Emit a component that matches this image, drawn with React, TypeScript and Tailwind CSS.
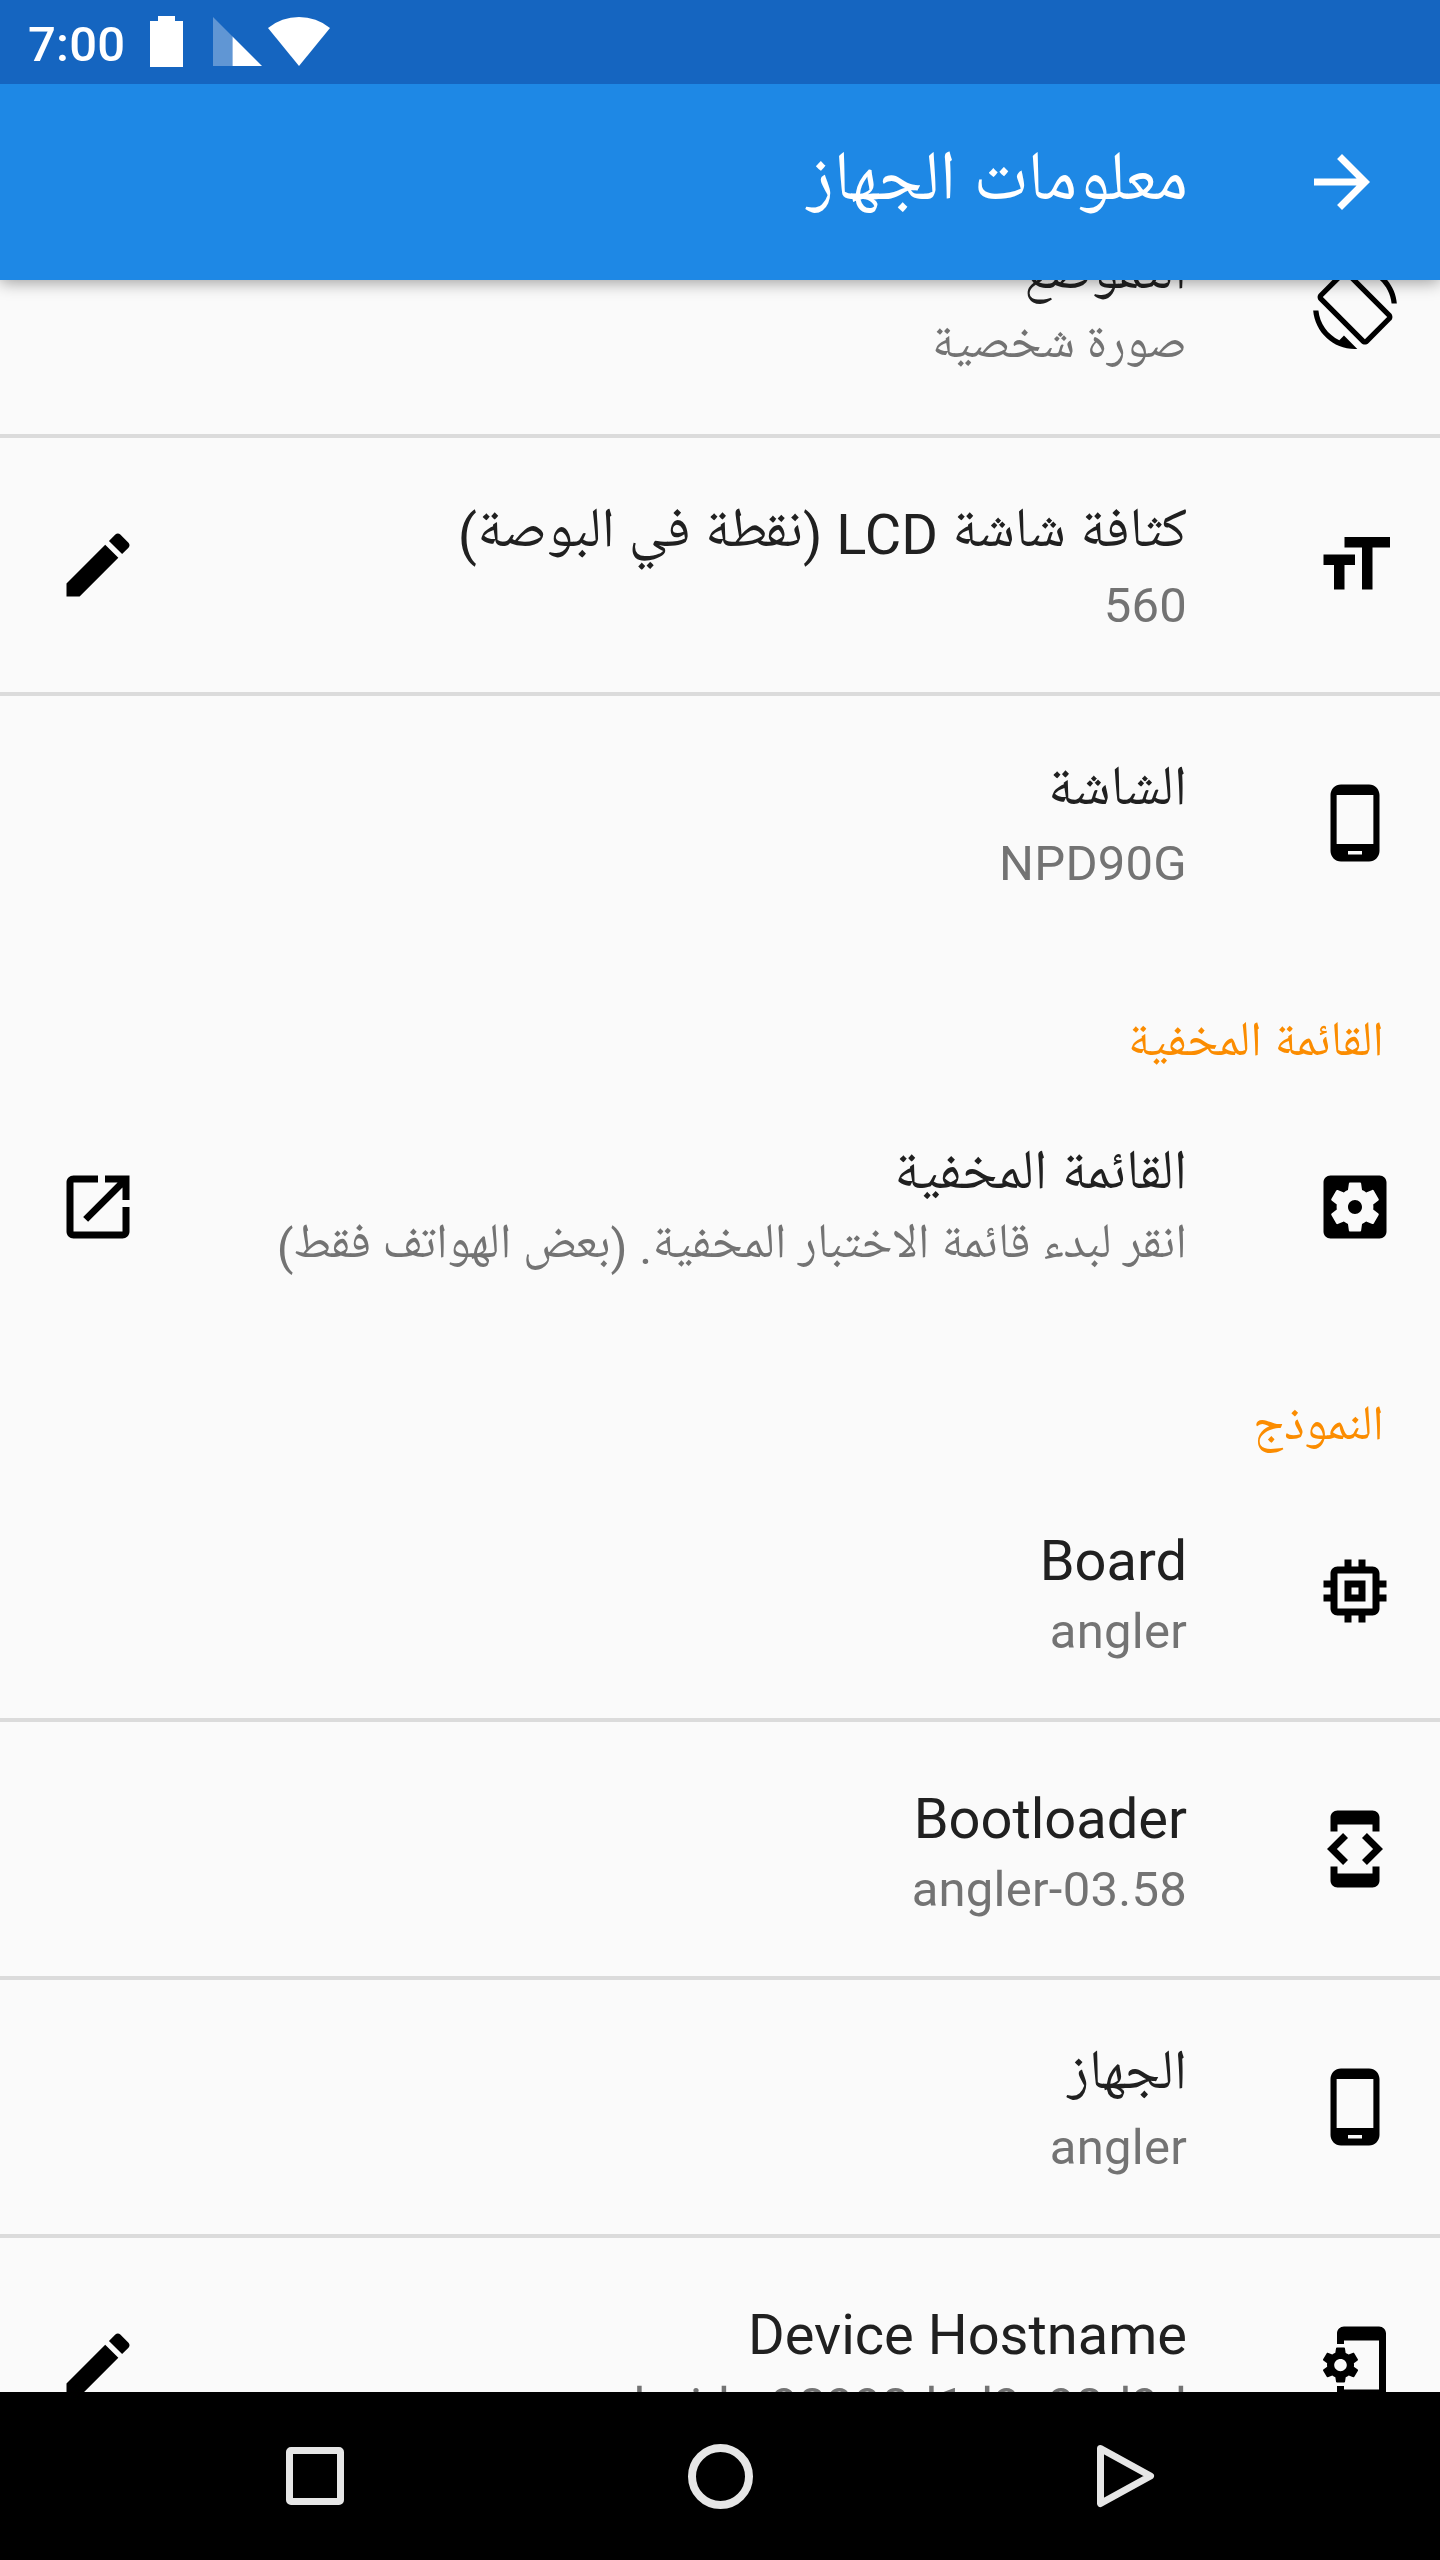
import type { ReactNode } from 'react';
import { MdPhonelinkSetup } from 'react-icons/md';

const ICON_PATHS = {
  arrowForward: 'M12 4l-1.41 1.41L16.17 11H4v2h12.17l-5.58 5.59L12 20l8-8z',
  screenRotation:
    'M16.48 2.52c3.27 1.55 5.61 4.72 5.97 8.48h1.5C23.44 4.84 18.29 0 12 0l-.66.03 3.81 3.81 1.33-1.32zm-6.25-.77c-.59-.59-1.54-.59-2.12 0L1.75 8.11c-.59.59-.59 1.54 0 2.12l12.02 12.02c.59.59 1.54.59 2.12 0l6.36-6.36c.59-.59.59-1.54 0-2.12L10.23 1.75zm4.6 19.44L2.81 9.17l6.36-6.36 12.02 12.02-6.36 6.36zm-7.31.29C4.25 19.94 1.91 16.76 1.55 13H.05C.56 19.16 5.71 24 12 24l.66-.03-3.81-3.81-1.33 1.32z',
  formatSize: 'M9 4v3h5v12h3V7h5V4H9zm-6 8h3v7h3v-7h3V9H3v3z',
  phone:
    'M16 1H8C6.34 1 5 2.34 5 4v16c0 1.66 1.34 3 3 3h8c1.66 0 3-1.34 3-3V4c0-1.66-1.34-3-3-3zm-2 20h-4v-1h4v1zm3.25-3H6.75V4h10.5v14z',
  settingsApplications:
    'M12 10c-1.1 0-2 .9-2 2s.9 2 2 2 2-.9 2-2-.9-2-2-2zm7-7H5c-1.11 0-2 .9-2 2v14c0 1.1.89 2 2 2h14c1.11 0 2-.9 2-2V5c0-1.1-.89-2-2-2zm-1.75 9c0 .23-.02.46-.05.68l1.48 1.16c.13.11.17.3.08.45l-1.4 2.42c-.09.15-.27.21-.43.15l-1.74-.7c-.36.28-.76.51-1.18.69l-.26 1.85c-.03.17-.18.3-.35.3h-2.8c-.17 0-.32-.13-.35-.29l-.26-1.85c-.43-.18-.82-.41-1.18-.69l-1.74.7c-.16.06-.34 0-.43-.15l-1.4-2.42c-.09-.15-.05-.34.08-.45l1.48-1.16c-.03-.23-.05-.46-.05-.69 0-.23.02-.46.05-.68l-1.48-1.16c-.13-.11-.17-.3-.08-.45l1.4-2.42c.09-.15.27-.21.43-.15l1.74.7c.36-.28.76-.51 1.18-.69l.26-1.85c.03-.17.18-.3.35-.3h2.8c.17 0 .32.13.35.29l.26 1.85c.43.18.82.41 1.18.69l1.74-.7c.16-.06.34 0 .43.15l1.4 2.42c.09.15.05.34-.08.45l-1.48 1.16c.03.23.05.46.05.69z',
  memory:
    'M15 9H9v6h6V9zm-2 4h-2v-2h2v2zm8-2V9h-2V7c0-1.1-.9-2-2-2h-2V3h-2v2h-2V3H9v2H7c-1.1 0-2 .9-2 2v2H3v2h2v2H3v2h2v2c0 1.1.9 2 2 2h2v2h2v-2h2v2h2v-2h2c1.1 0 2-.9 2-2v-2h2v-2h-2v-2h2zm-4 6H7V7h10v10z',
  developerMode:
    'M7 5h10v2h2V3c0-1.1-.9-1.99-2-1.99L7 1c-1.1 0-2 .9-2 2v4h2V5zm8.41 11.59L20 12l-4.59-4.59L14 8.83 17.17 12 14 15.17l1.41 1.42zM10 15.17L6.83 12 10 8.83 8.59 7.41 4 12l4.59 4.59L10 15.17zM17 19H7v-2H5v4c0 1.1.9 2 2 2h10c1.1 0 2-.9 2-2v-4h-2v2z',
  edit: 'M3 17.25V21h3.75L17.81 9.94l-3.75-3.75L3 17.25zM20.71 7.04c.39-.39.39-1.02 0-1.41l-2.34-2.34c-.39-.39-1.02-.39-1.41 0l-1.83 1.83 3.75 3.75 1.83-1.83z',
  openInNew:
    'M19 19H5V5h7V3H5c-1.11 0-2 .9-2 2v14c0 1.1.89 2 2 2h14c1.1 0 2-.9 2-2v-7h-2v7zM14 3v2h3.59l-9.83 9.83 1.41 1.41L19 6.41V10h2V3h-7z',
};

function Icon({ name }: { name: keyof typeof ICON_PATHS }) {
  return (
    <svg viewBox="0 0 24 24" className="size-[84px] shrink-0 fill-current" aria-hidden="true">
      <path d={ICON_PATHS[name]} />
    </svg>
  );
}

type RowProps = { icon: ReactNode; title: string; value: string; action?: ReactNode; divider?: boolean };

// Letter spacing would break the joins of Arabic script, so only Latin values get it.
const isLatin = (text: string) => /^[\x20-\x7e]+$/.test(text);

function Row({ icon, title, value, action, divider }: RowProps) {
  const valueSpacing = isLatin(value) ? 'tracking-[0.25px]' : '[word-spacing:-0.6px]';
  return (
    <li className={divider ? 'h-[258px] border-b-4 border-[#dbdbdb]' : 'h-[254px]'}>
      <div className="flex h-[254px] items-center pr-[43px] pl-14 text-black">
        {icon}
        <div className="mr-[126px] flex h-full flex-1 flex-col pt-16 text-right">
          <p className="text-[56px] leading-[66px] whitespace-nowrap text-[#202020]">{title}</p>
          <p className={`mt-[9px] text-[49px] leading-[58px] whitespace-nowrap text-[#737373] ${valueSpacing}`}>
            {value}
          </p>
        </div>
        {action}
      </div>
    </li>
  );
}

function SectionHeader({ children }: { children: ReactNode }) {
  return (
    <li className="h-[130px] px-14 pt-[67px] text-[49px] leading-[58px] text-[#fb8c00]">{children}</li>
  );
}

function StatusBar() {
  return (
    <div dir="ltr" className="relative z-20 flex h-[84px] shrink-0 items-start bg-[#1565c0] pl-[28px] text-white">
      <span className="mt-4 w-[122px] text-[49px] leading-[58px] font-medium tracking-[0.25px]">7:00</span>
      <svg viewBox="0 0 33 51" className="mt-4 h-[51px] w-[33px] fill-current">
        <path d="M8 0h17v5h8v46H0V5h8z" />
      </svg>
      <svg viewBox="0 0 49 49" className="mt-[17px] ml-[30px] size-[49px] fill-current">
        <path d="M0 0L19.500 19.500V49H0z" opacity="0.32" />
        <path d="M19.500 19.500L49 49H19.500z" />
      </svg>
      <svg viewBox="0 0 62 49" className="mt-[17px] ml-[6px] h-[49px] w-[62px] fill-current">
        <path d="M31 49L0 11A49.200 49.200 0 0 1 62 11z" />
      </svg>
    </div>
  );
}

function NavigationBar() {
  return (
    <nav dir="ltr" className="flex h-[168px] shrink-0 items-center justify-center bg-black text-[#e6e6e6]">
      <div className="flex w-[404px] justify-center pr-[2px]">
        <div className="size-[58px] rounded-[5px] border-[7px] border-current" />
      </div>
      <div className="flex w-[404px] justify-center">
        <div className="size-[65px] rounded-full border-8 border-current" />
      </div>
      <div className="flex w-[404px] justify-center pl-[3px]">
        <svg viewBox="0 0 60 66" className="h-[66px] w-[60px]" fill="none" stroke="currentColor">
          <path d="M4.500 5.500L54.500 33L4.500 60.500z" strokeWidth="7" strokeLinejoin="round" />
        </svg>
      </div>
    </nav>
  );
}

export default function App() {
  return (
    <div
      dir="rtl"
      className="flex h-[2560px] w-[1440px] flex-col overflow-hidden bg-[#fafafa] font-['Roboto','Noto_Naskh_Arabic_UI','Noto_Naskh_Arabic','DejaVu_Sans',sans-serif]"
    >
      <StatusBar />
      <header className="relative z-10 flex h-[196px] shrink-0 items-center bg-[#1e88e5] pr-14 text-white shadow-[0_2px_16px_rgba(0,0,0,0.4)]">
        <Icon name="arrowForward" />
        <h1 className="mr-28 pt-1 text-[70px] leading-[82px]">معلومات الجهاز</h1>
      </header>
      <main className="min-h-0 flex-1 overflow-hidden">
        <ul className="-mt-[100px]">
          <Row icon={<Icon name="screenRotation" />} title="التموضع" value="صورة شخصية" divider />
          <Row
            icon={<Icon name="formatSize" />}
            title="كثافة شاشة LCD (نقطة في البوصة)"
            value="560"
            action={<Icon name="edit" />}
            divider
          />
          <Row icon={<Icon name="phone" />} title="الشاشة" value="NPD90G" />
          <SectionHeader>القائمة المخفية</SectionHeader>
          <Row
            icon={<Icon name="settingsApplications" />}
            title="القائمة المخفية"
            value="انقر لبدء قائمة الاختبار المخفية. (بعض الهواتف فقط)"
            action={<Icon name="openInNew" />}
          />
          <SectionHeader>النموذج</SectionHeader>
          <Row icon={<Icon name="memory" />} title="Board" value="angler" divider />
          <Row icon={<Icon name="developerMode" />} title="Bootloader" value="angler-03.58" divider />
          <Row icon={<Icon name="phone" />} title="الجهاز" value="angler" divider />
          <Row
            icon={<MdPhonelinkSetup className="size-[84px] shrink-0 translate-x-[3px]" />}
            title="Device Hostname"
            value="android-a98998d1d9a98d9d"
            action={<Icon name="edit" />}
          />
        </ul>
      </main>
      <NavigationBar />
    </div>
  );
}
